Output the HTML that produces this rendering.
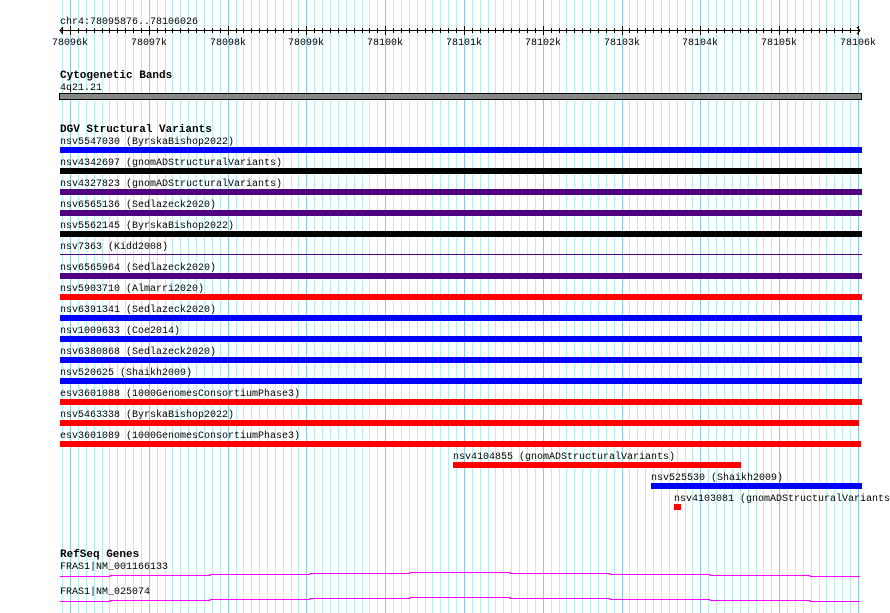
<!DOCTYPE html>
<html><head><meta charset="utf-8"><style>
html,body{margin:0;padding:0;background:#fff;}
svg{display:block;font-family:"Liberation Mono",monospace;font-size:10px;}
.b{font-weight:bold;font-size:11px;}
</style></head><body>
<svg width="890" height="613" viewBox="0 0 890 613" shape-rendering="crispEdges">
<g stroke="#b2eef2" stroke-width="1">
<path d="M62.5 0V613M78.5 0V613M86.5 0V613M94.5 0V613M102.5 0V613M109.5 0V613M117.5 0V613M125.5 0V613M133.5 0V613M141.5 0V613M157.5 0V613M165.5 0V613M172.5 0V613M180.5 0V613M188.5 0V613M196.5 0V613M204.5 0V613M212.5 0V613M220.5 0V613M236.5 0V613M243.5 0V613M251.5 0V613M259.5 0V613M267.5 0V613M275.5 0V613M283.5 0V613M291.5 0V613M298.5 0V613M314.5 0V613M322.5 0V613M330.5 0V613M338.5 0V613M346.5 0V613M354.5 0V613M362.5 0V613M369.5 0V613M377.5 0V613M393.5 0V613M401.5 0V613M409.5 0V613M417.5 0V613M425.5 0V613M432.5 0V613M440.5 0V613M448.5 0V613M456.5 0V613M472.5 0V613M480.5 0V613M488.5 0V613M495.5 0V613M503.5 0V613M511.5 0V613M519.5 0V613M527.5 0V613M535.5 0V613M551.5 0V613M559.5 0V613M566.5 0V613M574.5 0V613M582.5 0V613M590.5 0V613M598.5 0V613M606.5 0V613M614.5 0V613M629.5 0V613M637.5 0V613M645.5 0V613M653.5 0V613M661.5 0V613M669.5 0V613M677.5 0V613M685.5 0V613M692.5 0V613M708.5 0V613M716.5 0V613M724.5 0V613M732.5 0V613M740.5 0V613M748.5 0V613M756.5 0V613M763.5 0V613M771.5 0V613M787.5 0V613M795.5 0V613M803.5 0V613M811.5 0V613M819.5 0V613M826.5 0V613M834.5 0V613M842.5 0V613M850.5 0V613"/>
</g>
<g stroke="#88cbe8" stroke-width="1">
<path d="M70.5 0V613M149.5 0V613M228.5 0V613M306.5 0V613M385.5 0V613M464.5 0V613M543.5 0V613M622.5 0V613M700.5 0V613M779.5 0V613M858.5 0V613"/>
</g>
<!-- ruler -->
<text x="60" y="24">chr4:78095876..78106026</text>
<path d="M60 30.5H860" stroke="#000"/>
<path d="M63 27l-3 3.5 3 3.5M857 27l3 3.5-3 3.5" stroke="#000" fill="none" shape-rendering="auto"/>
<path stroke="#000" d="M70.5 26v9M149.5 26v9M228.5 26v9M306.5 26v9M385.5 26v9M464.5 26v9M543.5 26v9M622.5 26v9M700.5 26v9M779.5 26v9M858.5 26v9"/>
<path stroke="#000" d="M62.5 28v5M78.5 28v5M86.5 28v5M94.5 28v5M102.5 28v5M109.5 28v5M117.5 28v5M125.5 28v5M133.5 28v5M141.5 28v5M157.5 28v5M165.5 28v5M172.5 28v5M180.5 28v5M188.5 28v5M196.5 28v5M204.5 28v5M212.5 28v5M220.5 28v5M236.5 28v5M243.5 28v5M251.5 28v5M259.5 28v5M267.5 28v5M275.5 28v5M283.5 28v5M291.5 28v5M298.5 28v5M314.5 28v5M322.5 28v5M330.5 28v5M338.5 28v5M346.5 28v5M354.5 28v5M362.5 28v5M369.5 28v5M377.5 28v5M393.5 28v5M401.5 28v5M409.5 28v5M417.5 28v5M425.5 28v5M432.5 28v5M440.5 28v5M448.5 28v5M456.5 28v5M472.5 28v5M480.5 28v5M488.5 28v5M495.5 28v5M503.5 28v5M511.5 28v5M519.5 28v5M527.5 28v5M535.5 28v5M551.5 28v5M559.5 28v5M566.5 28v5M574.5 28v5M582.5 28v5M590.5 28v5M598.5 28v5M606.5 28v5M614.5 28v5M629.5 28v5M637.5 28v5M645.5 28v5M653.5 28v5M661.5 28v5M669.5 28v5M677.5 28v5M685.5 28v5M692.5 28v5M708.5 28v5M716.5 28v5M724.5 28v5M732.5 28v5M740.5 28v5M748.5 28v5M756.5 28v5M763.5 28v5M771.5 28v5M787.5 28v5M795.5 28v5M803.5 28v5M811.5 28v5M819.5 28v5M826.5 28v5M834.5 28v5M842.5 28v5M850.5 28v5"/>
<g text-anchor="middle">
<text x="70" y="45">78096k</text><text x="149" y="45">78097k</text><text x="228" y="45">78098k</text><text x="306" y="45">78099k</text><text x="385" y="45">78100k</text><text x="464" y="45">78101k</text><text x="543" y="45">78102k</text><text x="622" y="45">78103k</text><text x="700" y="45">78104k</text><text x="779" y="45">78105k</text><text x="858" y="45">78106k</text>
</g>
<!-- cytoband -->
<text class="b" x="60" y="78">Cytogenetic Bands</text>
<text x="60" y="90">4q21.21</text>
<rect x="59.5" y="93.5" width="802" height="6" fill="#888" stroke="#000"/>
<!-- DGV -->
<text class="b" x="60" y="132">DGV Structural Variants</text>
<text x="60" y="144">nsv5547030 (ByrskaBishop2022)</text><rect x="60" y="147" width="802" height="6" fill="#0000ff"/>
<text x="60" y="165">nsv4342697 (gnomADStructuralVariants)</text><rect x="60" y="168" width="802" height="6" fill="#000"/>
<text x="60" y="186">nsv4327823 (gnomADStructuralVariants)</text><rect x="60" y="189" width="802" height="6" fill="#4e0080"/>
<text x="60" y="207">nsv6565136 (Sedlazeck2020)</text><rect x="60" y="210" width="802" height="6" fill="#4e0080"/>
<text x="60" y="228">nsv5562145 (ByrskaBishop2022)</text><rect x="60" y="231" width="802" height="6" fill="#000"/>
<text x="60" y="249">nsv7363 (Kidd2008)</text><rect x="60" y="254" width="802" height="1" fill="#4e0080"/>
<text x="60" y="270">nsv6565964 (Sedlazeck2020)</text><rect x="60" y="273" width="802" height="6" fill="#4e0080"/>
<text x="60" y="291">nsv5903710 (Almarri2020)</text><rect x="60" y="294" width="802" height="6" fill="#ff0000"/>
<text x="60" y="312">nsv6391341 (Sedlazeck2020)</text><rect x="60" y="315" width="802" height="6" fill="#0000ff"/>
<text x="60" y="333">nsv1009633 (Coe2014)</text><rect x="60" y="336" width="802" height="6" fill="#0000ff"/>
<text x="60" y="354">nsv6380868 (Sedlazeck2020)</text><rect x="60" y="357" width="802" height="6" fill="#0000ff"/>
<text x="60" y="375">nsv520625 (Shaikh2009)</text><rect x="60" y="378" width="802" height="6" fill="#0000ff"/>
<text x="60" y="396">esv3601088 (1000GenomesConsortiumPhase3)</text><rect x="60" y="399" width="802" height="6" fill="#ff0000"/>
<text x="60" y="417">nsv5463338 (ByrskaBishop2022)</text><rect x="60" y="420" width="799" height="6" fill="#ff0000"/>
<text x="60" y="438">esv3601089 (1000GenomesConsortiumPhase3)</text><rect x="60" y="441" width="801" height="6" fill="#ff0000"/>
<text x="453" y="459">nsv4104855 (gnomADStructuralVariants)</text><rect x="453" y="462" width="288" height="6" fill="#ff0000"/>
<text x="651" y="480">nsv525530 (Shaikh2009)</text><rect x="651" y="483" width="211" height="6" fill="#0000ff"/>
<text x="674" y="501">nsv4103081 (gnomADStructuralVariants</text><rect x="674" y="504" width="7" height="6" fill="#ff0000"/>
<!-- RefSeq -->
<text class="b" x="60" y="557">RefSeq Genes</text>
<text x="60" y="569">FRAS1|NM_001166133</text>
<path fill="none" stroke="#ff00ff" d="M60 576.5H110V575.5H210V574.5H310V573.5H410V572.5H510V573.5H610V574.5H710V575.5H810V576.5H860"/>
<text x="60" y="594">FRAS1|NM_025074</text>
<path fill="none" stroke="#ff00ff" d="M60 601.5H110V600.5H210V599.5H310V598.5H410V597.5H510V598.5H610V599.5H710V600.5H810V601.5H860"/>
</svg>
</body></html>
